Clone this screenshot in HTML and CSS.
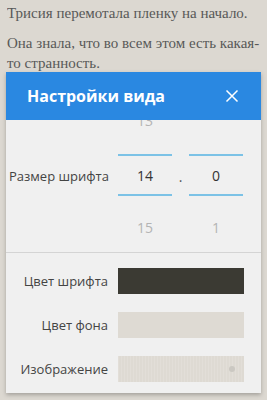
FILE: index.html
```html
<!DOCTYPE html>
<html>
    <head>
        <title>Настройки вида</title>
        <link rel="stylesheet" href="styles.css">
    </head>
    <body>
        <div class="page-text">
            <p class="cut"><span>Трисия перемотала пленку на начало.</span></p>
            <p>Она знала, что во всем этом есть какая-<br>то странность.</p>
        </div>

        <div class="dialog">
            <header class="dialog-head">
                <h1>Настройки вида</h1>
                <svg class="close" width="14" height="14" viewBox="0 0 14 14">
                    <path d="M1.5 1.5 L12.5 12.5 M12.5 1.5 L1.5 12.5" stroke="#fff" stroke-width="1.5" fill="none" />
                </svg>
            </header>

            <div class="size-row">
                <div class="label">Размер шрифта</div>
                <div class="picker">
                    <div class="item faded">13</div>
                    <div class="item current"><span>14</span></div>
                    <div class="item faded">15</div>
                </div>
                <div class="dot">.</div>
                <div class="picker">
                    <div class="item faded"></div>
                    <div class="item current"><span>0</span></div>
                    <div class="item faded">1</div>
                </div>
            </div>

            <div class="colors">
                <div class="color-row">
                    <div class="label">Цвет шрифта</div>
                    <div class="swatch dark"></div>
                </div>
                <div class="color-row">
                    <div class="label">Цвет фона</div>
                    <div class="swatch paper"></div>
                </div>
                <div class="color-row">
                    <div class="label">Изображение</div>
                    <div class="swatch texture"><i class="knob"></i></div>
                </div>
            </div>
        </div>
    </body>
</html>
```

FILE: styles.css
```css
body {
    margin: 0;
    height: 400px;
    overflow: hidden;
    background-color: #dcd8d1;
    font-family: "Open Sans", "Noto Sans", sans-serif;
}

.page-text {
    padding: 0 7px;
    font-family: "Liberation Serif", serif;
    font-size: 15px;
    line-height: 20px;
    color: #585858;
    white-space: nowrap;
}

.page-text p {
    margin: 0 0 10px;
}

/* first line is scrolled half under the top edge */
.page-text .cut {
    margin-top: 7px;
    height: 16px;
    overflow: hidden;
    display: flex;
    align-items: flex-end;
}

/* overlay dialog */
.dialog {
    position: absolute;
    top: 72px;
    left: 6px;
    width: 255px;
    background-color: #f0f0f0;
    box-shadow: 0 2px 4px rgba(0, 0, 0, 0.25);
}

.dialog-head {
    height: 48px;
    display: flex;
    align-items: center;
    justify-content: space-between;
    padding: 0 22px 0 21px;
    background-color: #2a88e1;
}

.dialog-head h1 {
    margin: 0;
    font-size: 16px;
    font-weight: bold;
    color: #fff;
}

.label {
    width: 112px;
    box-sizing: border-box;
    padding-right: 10px;
    text-align: right;
    font-size: 13px;
    color: #444;
    white-space: nowrap;
}

.size-row {
    height: 132px;
    display: grid;
    grid-template-columns: 112px 54px 17px 54px;
    align-items: center;
    border-bottom: 1px solid #d4d4d4;
}

.size-row .label {
    text-align: left;
    padding: 0 0 0 3px;
    margin-bottom: 20px;
}

.picker {
    height: 132px;
    overflow: hidden;
}

.item {
    height: 52px;
    box-sizing: border-box;
    display: flex;
    align-items: center;
    justify-content: center;
    font-size: 14px;
}

.item:first-child {
    margin-top: -23px;
    padding-bottom: 6px;
}

.faded {
    color: #b4b4b4;
}

.current span {
    width: 100%;
    height: 38px;
    display: flex;
    align-items: center;
    justify-content: center;
    border-top: 2px solid #7cc2e6;
    border-bottom: 2px solid #7cc2e6;
    color: #333;
}

.dot {
    margin-bottom: 20px;
    text-align: center;
    font-size: 14px;
    color: #555;
}

.colors {
    padding: 15px 0 11px;
    display: flex;
    flex-direction: column;
    gap: 18px;
}

.color-row {
    display: flex;
    align-items: center;
}

.swatch {
    width: 126px;
    height: 26px;
    position: relative;
}

.dark {
    background-color: #3b3a33;
}

.paper {
    background-color: #dedad3;
}

.texture {
    background-color: #dedad3;
    background-image: repeating-linear-gradient(90deg, rgba(255, 255, 255, 0.12) 0 1px, transparent 1px 3px);
}

.knob {
    position: absolute;
    right: 9px;
    top: 10px;
    width: 6px;
    height: 6px;
    border-radius: 50%;
    background-color: #cbc8c2;
}
```
